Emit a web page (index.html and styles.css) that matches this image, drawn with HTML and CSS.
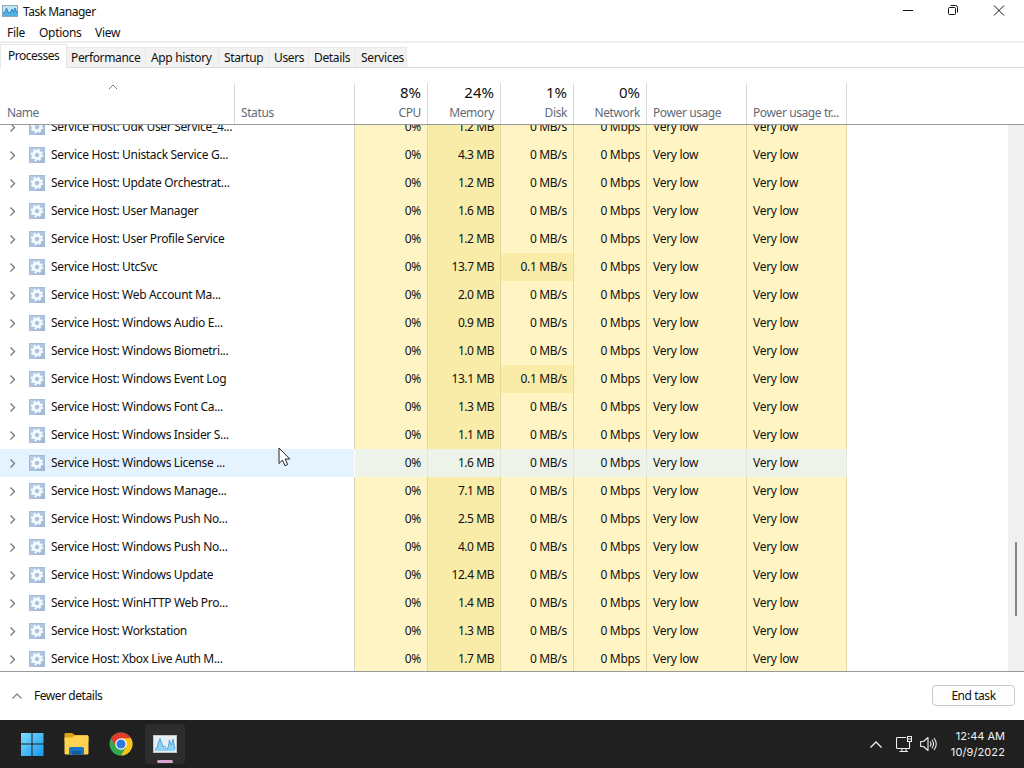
FILE: index.html
```html
<!DOCTYPE html>
<html lang="en">
<head>
<meta charset="utf-8">
<title>Task Manager</title>
<link rel="stylesheet" href="styles.css">
</head>
<body>
<svg class="defs" width="0" height="0">
  <defs>
    <linearGradient id="gearBg" x1="0" y1="0" x2="1" y2="1"><stop offset="0" stop-color="#bdd3e9"/><stop offset="1" stop-color="#9ab5d6"/></linearGradient>
    <linearGradient id="winBlue" x1="0" y1="0" x2="1" y2="1"><stop offset="0" stop-color="#7fdcff"/><stop offset="1" stop-color="#1599ee"/></linearGradient>
    <symbol id="gear" viewBox="0 0 16 16">
      <rect width="16" height="16" fill="url(#gearBg)"/>
      <path d="M.5 15.500V.5H15.500" fill="none" stroke="#a3bbd4"/>
      <circle cx="8" cy="8" r="3.600" fill="none" stroke="#f5faff" stroke-width="2.600"/>
      <circle cx="8" cy="8" r="5.400" fill="none" stroke="#f5faff" stroke-width="1.800" stroke-dasharray="2.120 2.120"/>
    </symbol>
    <symbol id="monitor" viewBox="0 0 24 18">
      <rect x=".5" y=".5" width="23" height="17" fill="#e6edf3" stroke="#bcc6ce"/>
      <path d="M2 16V14L4 13L5 9L7 3.500L8.500 8L10 12L11.500 13L13 14L14 15L15.500 12L16.500 5L17.500 9L18.500 10L20 4L21 10L22 14V16Z" fill="#8fd2f4"/>
      <path d="M2 14.500L4 13L5 9L7 3.500L8.500 8L10 12L11.500 11L13 14L14.500 14L15.500 11L16.500 5L17.500 9L18.500 10L20 4L21 10L22 14" fill="none" stroke="#3f9fd6" stroke-width=".9"/>
    </symbol>
  </defs>
</svg>
<div class="window">
  <header class="titlebar">
    <svg class="title-icon" width="16" height="12" viewBox="0 0 16 12"><rect x=".5" y=".5" width="15" height="11" fill="#c5e4f3" stroke="#8fa9b8"/><path d="M1 11V8L3 7L4.500 3L6 7L8 8L10 4L11.500 7L13 3L15 8V11Z" fill="#4fb0e2"/><path d="M1 8L3 7L4.500 3L6 7L8 8L10 4L11.500 7L13 3L15 8" fill="none" stroke="#2583bd" stroke-width=".9"/></svg>
    <span class="title">Task Manager</span>
    <svg class="controls" width="124" height="21" viewBox="0 0 124 21" fill="none" stroke="#111"><path d="M3 10.500H13"/><rect x="48.500" y="7.500" width="7" height="7" rx="1"/><path d="M50.500 5.500H55.500Q57.500 5.500 57.500 7.500V12.500"/><path d="M94 5.500L104 15.500M104 5.500L94 15.500"/></svg>
  </header>
  <nav class="menu"><span class="m-file">File</span><span class="m-options">Options</span><span>View</span></nav>
  <div class="tabs">
    <span class="tab active">Processes</span><span class="tab t-perf">Performance</span><span class="tab t-hist">App history</span><span class="tab t-start">Startup</span><span class="tab t-users">Users</span><span class="tab t-details">Details</span><span class="tab t-serv">Services</span>
  </div>
  <div class="head grid">
    <div class="h name-h"><svg width="10" height="6" viewBox="0 0 10 6" fill="none" stroke="#777"><path d="M1 5L5 1L9 5"/></svg><span>Name</span></div>
    <div class="h"><span>Status</span></div>
    <div class="h num"><b>8%</b><span>CPU</span></div>
    <div class="h num"><b>24%</b><span>Memory</span></div>
    <div class="h num"><b>1%</b><span>Disk</span></div>
    <div class="h num"><b>0%</b><span>Network</span></div>
    <div class="h"><span>Power usage</span></div>
    <div class="h"><span>Power usage tr...</span></div>
  </div>
  <div class="body">
    <div class="rows" id="rows"></div>
    <div class="scrollbar"><div class="thumb"></div></div>
    <svg class="cursor" width="13" height="20" viewBox="0 0 13 20"><path d="M1 1V16.500L4.500 13.200L7 18.700L9.600 17.500L7.200 12H11.800Z" fill="#fff" stroke="#222"/></svg>
  </div>
  <footer class="footer">
    <svg width="10" height="6" viewBox="0 0 10 6" fill="none" stroke="#8a6a8c" stroke-width="1.100"><path d="M.5 5.500L5 1L9.500 5.500"/></svg>
    <span class="fewer">Fewer details</span>
    <button class="end">End task</button>
  </footer>
</div>
<div class="taskbar">
  <svg class="start" width="24" height="24" viewBox="0 0 24 24"><path d="M1 1H11.500V11.500H1ZM12.500 1H23.500V11.500H12.500ZM1 12.500H11.500V24H1ZM12.500 12.500H23.500V24H12.500Z" fill="url(#winBlue)"/></svg>
  <svg class="folder" width="26" height="22" viewBox="0 0 26 22"><path d="M1.500 0H8L11 2H23Q24.500 2 24.500 4V8H.5V1Q.5 0 1.500 0Z" fill="#dca019"/><path d="M.5 4.500H8L11 2.500H23.500Q24.500 2.500 24.500 4V20Q24.500 21.500 23.500 21.500H1.500Q.5 21.500 .5 20Z" fill="#ffd251"/><path d="M5 21.500V15.500Q5 14 6.500 14H18.500Q20 14 20 15.500V21.500Z" fill="#1676c5"/><path d="M8 18H17V21.500H8Z" fill="#0e5b9d"/></svg>
  <svg class="chrome" width="24" height="24" viewBox="0 0 24 24"><circle cx="12" cy="12" r="11.500" fill="#35a852"/><path d="M12 12L2.040 6.250A11.500 11.500 0 0 1 21.960 6.250Z" fill="#e33b2e"/><path d="M12 6.250H21.960A11.500 11.500 0 0 1 12 23.500L17 14.900Z" fill="#fbc116"/><path d="M2.040 6.250L7.020 14.870L12 12V6.250Z" fill="#e33b2e"/><circle cx="12" cy="12" r="5.750" fill="#fff"/><circle cx="12" cy="12" r="4.500" fill="#2f76df"/></svg>
  <div class="active-app"><svg width="24" height="18"><use href="#monitor"/></svg><i></i></div>
  <div class="tray">
    <svg width="12" height="7" viewBox="0 0 12 7" fill="none" stroke="#eee" stroke-width="1.300"><path d="M.5 6.500L6 1L11.500 6.500"/></svg>
    <svg class="net" width="16" height="16" viewBox="0 0 16 16" fill="none" stroke="#eee" stroke-width="1.100"><path d="M10 1.500H1.500Q.5 1.500.5 2.500V11.500Q.5 12.500 1.500 12.500H13.500M6 12.500V15.500M10 12.500V15.500M3.500 15.500H12M11.500.5H15.500V5.500H11.500ZM13.500 5.500V12.500M11.500 3H15.500"/></svg>
    <svg class="vol" width="17" height="16" viewBox="0 0 17 16" fill="none" stroke="#eee" stroke-width="1.100" stroke-linejoin="round"><path d="M.7 5.500H3.500L8 1.500V14.500L3.500 10.500H.7ZM10 5.500Q12 8 10 10.500M12 3.700Q15 8 12 12.300M14 2Q18.500 8 14 14"/></svg>
    <div class="clock"><span>12:44 AM</span><span class="date">10/9/2022</span></div>
  </div>
</div>
<script src="app.js"></script>
</body>
</html>
```
FILE: styles.css
```css
* { box-sizing: border-box; }
body { margin: 0; width: 1024px; height: 768px; overflow: hidden; background: #fff; color: #111; font: 12px/16px "Noto Sans", "Open Sans", sans-serif; letter-spacing: -0.3px; }
.defs { position: absolute; }
svg { display: block; flex: none; }
.window { height: 720px; display: flex; flex-direction: column; }
.titlebar { height: 24px; display: flex; align-items: flex-start; padding-left: 2px; }
.title-icon { margin-top: 5px; }
.title { margin: 4px 0 0 5px; letter-spacing: -0.5px; }
.controls { margin-left: auto; }
.menu { height: 19px; display: flex; padding: 1px 0 0 7px; border-bottom: 2px solid #efefef; white-space: nowrap; }
.m-file { width: 32px; }
.m-options { width: 56px; }
.tabs { height: 25px; display: flex; align-items: flex-end; border-bottom: 1px solid #dcdcdc; white-space: nowrap; }
.tab { height: 20px; padding: 2px 0 0 4px; background: #f2f2f2; border: 1px solid #e8e8e8; border-width: 1px 1px 0 0; letter-spacing: -0.35px; }
.tab.active { height: 24px; width: 67px; margin-bottom: -1px; padding: 3px 0 0 7px; background: #fff; border-left: 1px solid #e8e8e8; letter-spacing: -0.5px; }
.t-perf { width: 79px; }
.t-hist { width: 73px; padding-left: 5px; }
.t-start { width: 50px; padding-left: 5px; }
.t-users { width: 40px; padding-left: 5px; }
.t-details { width: 47px; padding-left: 5px; }
.t-serv { width: 51px; padding-left: 5px; }
.grid { display: grid; grid-template-columns: 235px 120px 73px 73px 73px 73px 100px 100px; }
.head { height: 57px; padding-top: 15px; border-bottom: 1px solid #999; color: #5f6b78; letter-spacing: -0.4px; }
.h { display: flex; flex-direction: column; justify-content: flex-end; padding: 0 6px 3px; border-right: 1px solid #d9d9d9; white-space: nowrap; }
.h b { color: #111; font-weight: 400; font-size: 15px; line-height: 19px; margin-bottom: 3px; letter-spacing: 0; }
.num { text-align: right; }
.name-h { padding-left: 7px; justify-content: space-between; letter-spacing: -0.5px; }
.name-h svg { margin: 1px 0 0 101px; }
.body { position: relative; height: 547px; display: flex; justify-content: space-between; overflow: hidden; border-bottom: 1px solid #999; }
.rows { margin-top: -12px; flex: none; }
.row { height: 28px; line-height: 28px; }
.c { border-right: 1px solid #e3d9a5; background: #fff4c4; padding: 0 6px; white-space: nowrap; }
.name { display: flex; align-items: center; padding-left: 9px; letter-spacing: -0.33px; }
.name .gear { margin: 0 6px 0 13px; }
.status { border-right: 1px solid #d9d4bd; }
.mem { background: #f9eca8; letter-spacing: -0.45px; }
.busy { background: #f9eca8; }
.hover .name, .hover .status { background: #e5f3ff; }
.hover .status { border-color: #fff; }
.hover .c { background: #eef3ea; border-color: #e2e7dc; }
.scrollbar { width: 16px; background: #f0f0f0; padding: 417px 0 0 7px; }
.thumb { width: 2px; height: 74px; background: #858585; }
.cursor { position: absolute; left: 278px; top: 322px; }
.footer { height: 48px; display: flex; align-items: center; padding: 0 9px 0 12px; }
.fewer { margin-left: 12px; letter-spacing: -0.45px; }
.end { margin-left: auto; width: 83px; height: 21px; margin-bottom: 1px; padding: 0; border: 1px solid #c9c9c9; border-radius: 4px; background: #fefefe; font: inherit; letter-spacing: -0.45px; color: #111; }
.taskbar { height: 48px; background: #202020; display: flex; align-items: center; padding-left: 20px; }
.folder { margin-left: 20px; }
.chrome { margin-left: 19px; }
.active-app { position: relative; width: 40px; height: 40px; margin-left: 12px; border-radius: 4px; background: #2d2d2d; display: flex; align-items: center; justify-content: center; }
.active-app i { position: absolute; bottom: 1px; left: 12px; width: 16px; height: 3px; border-radius: 2px; background: #d8a5d3; }
.tray { margin-left: auto; display: flex; align-items: center; padding-right: 19px; color: #f2f2f2; }
.net { margin-left: 14px; }
.vol { margin-left: 8px; }
.clock { display: flex; flex-direction: column; text-align: right; width: 55px; margin-left: 13px; font-family: Inter, sans-serif; font-size: 11px; letter-spacing: 0; white-space: nowrap; }
.date { letter-spacing: 0.1px; }
```
FILE: app.js
```
const processes = [
  ["Udk User Service_4...", "1.2"], ["Unistack Service G...", "4.3"],
  ["Update Orchestrat...", "1.2"], ["User Manager", "1.6"],
  ["User Profile Service", "1.2"], ["UtcSvc", "13.7", "0.1"],
  ["Web Account Ma...", "2.0"], ["Windows Audio E...", "0.9"],
  ["Windows Biometri...", "1.0"], ["Windows Event Log", "13.1", "0.1"],
  ["Windows Font Ca...", "1.3"], ["Windows Insider S...", "1.1"],
  ["Windows License ...", "1.6"], ["Windows Manage...", "7.1"],
  ["Windows Push No...", "2.5"], ["Windows Push No...", "4.0"],
  ["Windows Update", "12.4"], ["WinHTTP Web Pro...", "1.4"],
  ["Workstation", "1.3"], ["Xbox Live Auth M...", "1.7"]
];
document.getElementById("rows").innerHTML = processes.map(([name, mem, disk], i) => `
  <div class="row grid${i === 12 ? " hover" : ""}">
    <div class="name"><svg width="7" height="9" viewBox="0 0 7 9" fill="none" stroke="#777" stroke-width="1.300"><path d="M1.500 .5L5.500 4.500L1.500 8.500"/></svg><svg class="gear" width="16" height="16"><use href="#gear"/></svg><span>Service Host: ${name}</span></div>
    <div class="status"></div>
    <div class="c num">0%</div>
    <div class="c num mem">${mem} MB</div>
    <div class="c num${disk ? " busy" : ""}">${disk || 0} MB/s</div>
    <div class="c num">0 Mbps</div>
    <div class="c">Very low</div>
    <div class="c">Very low</div>
  </div>`).join("");
```
